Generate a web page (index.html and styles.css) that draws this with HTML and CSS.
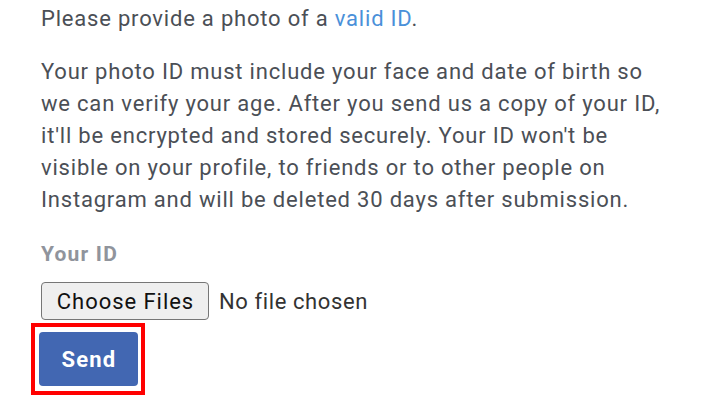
FILE: index.html
```html
<!DOCTYPE html>
<html lang="en">
<head>
<meta charset="utf-8">
<link rel="stylesheet" href="styles.css">
</head>
<body>
<main class="form">
  <p class="intro">Please provide a photo of a <a class="link" href="#">valid ID</a>.</p>
  <p class="info">Your photo ID must include your face and date of birth so we can verify your age. After you send us a copy of your ID, it'll be encrypted and stored securely. Your ID won't be visible on your profile, to friends or to other people on Instagram and will be deleted 30 days after submission.</p>
  <div class="label">Your ID</div>
  <div class="file-row">
    <button class="file-btn" type="button">Choose Files</button>
    <span class="file-status">No file chosen</span>
  </div>
  <div class="highlight">
    <button class="send" type="button">Send</button>
  </div>
</main>
</body>
</html>
```

FILE: styles.css
```css
html, body {
  margin: 0;
  padding: 0;
  background: #ffffff;
}

body {
  font-family: Roboto, "Liberation Sans", Arial, sans-serif;
}

.form {
  padding: 3px 0 0 41px;
  width: 630px;
}

.intro, .info {
  margin: 0;
  font-size: 22px;
  line-height: 32px;
  letter-spacing: 0.8px;
  color: #4b4f56;
}

.info {
  margin-top: 21px;
}

.link {
  color: #4a90d9;
  text-decoration: none;
}

.label {
  margin-top: 26px;
  font-size: 21px;
  line-height: 24px;
  font-weight: 700;
  letter-spacing: 1.2px;
  color: #90949c;
}

.file-row {
  margin-top: 16px;
  display: flex;
  align-items: center;
  gap: 10px;
}

.file-btn {
  box-sizing: border-box;
  height: 38px;
  width: 168px;
  padding: 0 0 0 1px;
  font-family: Roboto, "Liberation Sans", Arial, sans-serif;
  font-size: 22px;
  letter-spacing: 0.95px;
  color: #111111;
  background: #efefef;
  border: 1px solid #767676;
  border-radius: 4px;
}

.file-status {
  font-size: 22px;
  letter-spacing: 0.6px;
  color: #333333;
}

.highlight {
  display: inline-block;
  margin: 3px 0 0 -10px;
  padding: 5px 3px 5px 4px;
  border: 4px solid #ff0000;
}

.send {
  display: block;
  width: 99px;
  height: 54px;
  padding: 0 0 0 1px;
  border: none;
  border-radius: 4px;
  background: #4267b2;
  color: #ffffff;
  font-family: Roboto, "Liberation Sans", Arial, sans-serif;
  font-size: 22px;
  font-weight: 700;
  letter-spacing: 1.2px;
}
```
